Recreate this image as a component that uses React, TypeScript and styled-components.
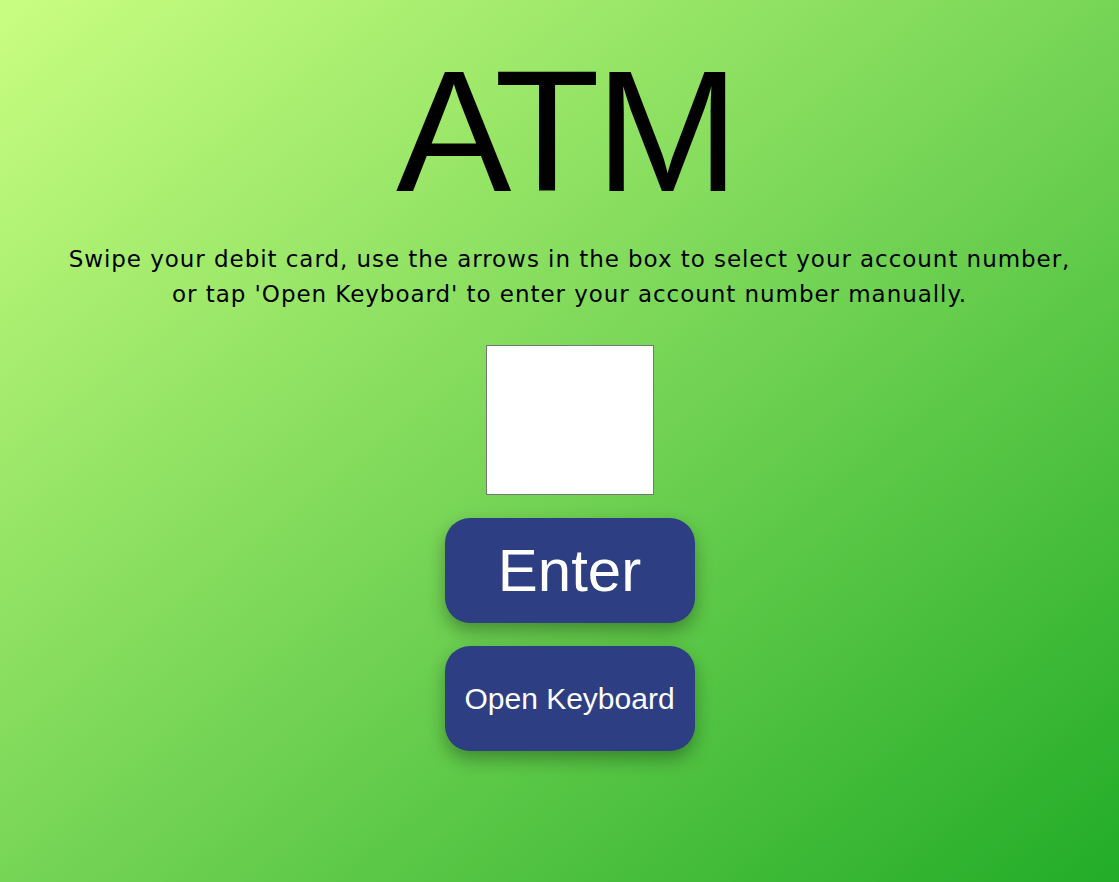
import React from "react";
import styled, { createGlobalStyle } from "styled-components";

const GlobalStyle = createGlobalStyle`
  html, body {
    margin: 0;
    padding: 0;
    height: 100%;
  }
  body {
    font-family: "Liberation Sans", Arial, sans-serif;
    background: linear-gradient(to bottom right, #c9fe81 0%, #77d556 50%, #22ac28 100%);
    min-height: 882px;
    overflow: hidden;
  }
`;

const Page = styled.main`
  min-height: 882px;
  display: flex;
  flex-direction: column;
  align-items: center;
  padding: 45px 0 0 20px;
  box-sizing: border-box;
`;

const Title = styled.h1`
  margin: 0 0 0 -8px;
  font-family: "Liberation Sans", Arial, sans-serif;
  font-weight: 400;
  font-size: 173px;
  line-height: 173px;
  color: #000;
  letter-spacing: -4.5px;
`;

const Instructions = styled.p`
  margin: 24px 0 0;
  font-family: "DejaVu Sans", Verdana, sans-serif;
  font-size: 23px;
  line-height: 35px;
  letter-spacing: 0.95px;
  color: #000;
  text-align: center;
  white-space: nowrap;
`;

const AccountBox = styled.div`
  margin-top: 33px;
  width: 168px;
  height: 150px;
  box-sizing: border-box;
  background: #fff;
  border: 1px solid #767676;
`;

const ActionButton = styled.button<{ $size: number }>`
  margin-top: 23px;
  width: 250px;
  height: 105px;
  border: none;
  border-radius: 25px;
  background: #2d3e83;
  color: #fff;
  font-family: "Liberation Sans", Arial, sans-serif;
  font-size: ${(p) => p.$size}px;
  padding: 0 10px;
  box-shadow: 0 8px 18px rgba(0, 0, 0, 0.32);
  cursor: pointer;
`;

export default function App() {
  return (
    <>
      <GlobalStyle />
      <Page>
        <Title>ATM</Title>
        <Instructions>
          Swipe your debit card, use the arrows in the box to select your account number,
          <br />
          or tap 'Open Keyboard' to enter your account number manually.
        </Instructions>
        <AccountBox />
        <ActionButton $size={60}>Enter</ActionButton>
        <ActionButton $size={30}>Open Keyboard</ActionButton>
      </Page>
    </>
  );
}
